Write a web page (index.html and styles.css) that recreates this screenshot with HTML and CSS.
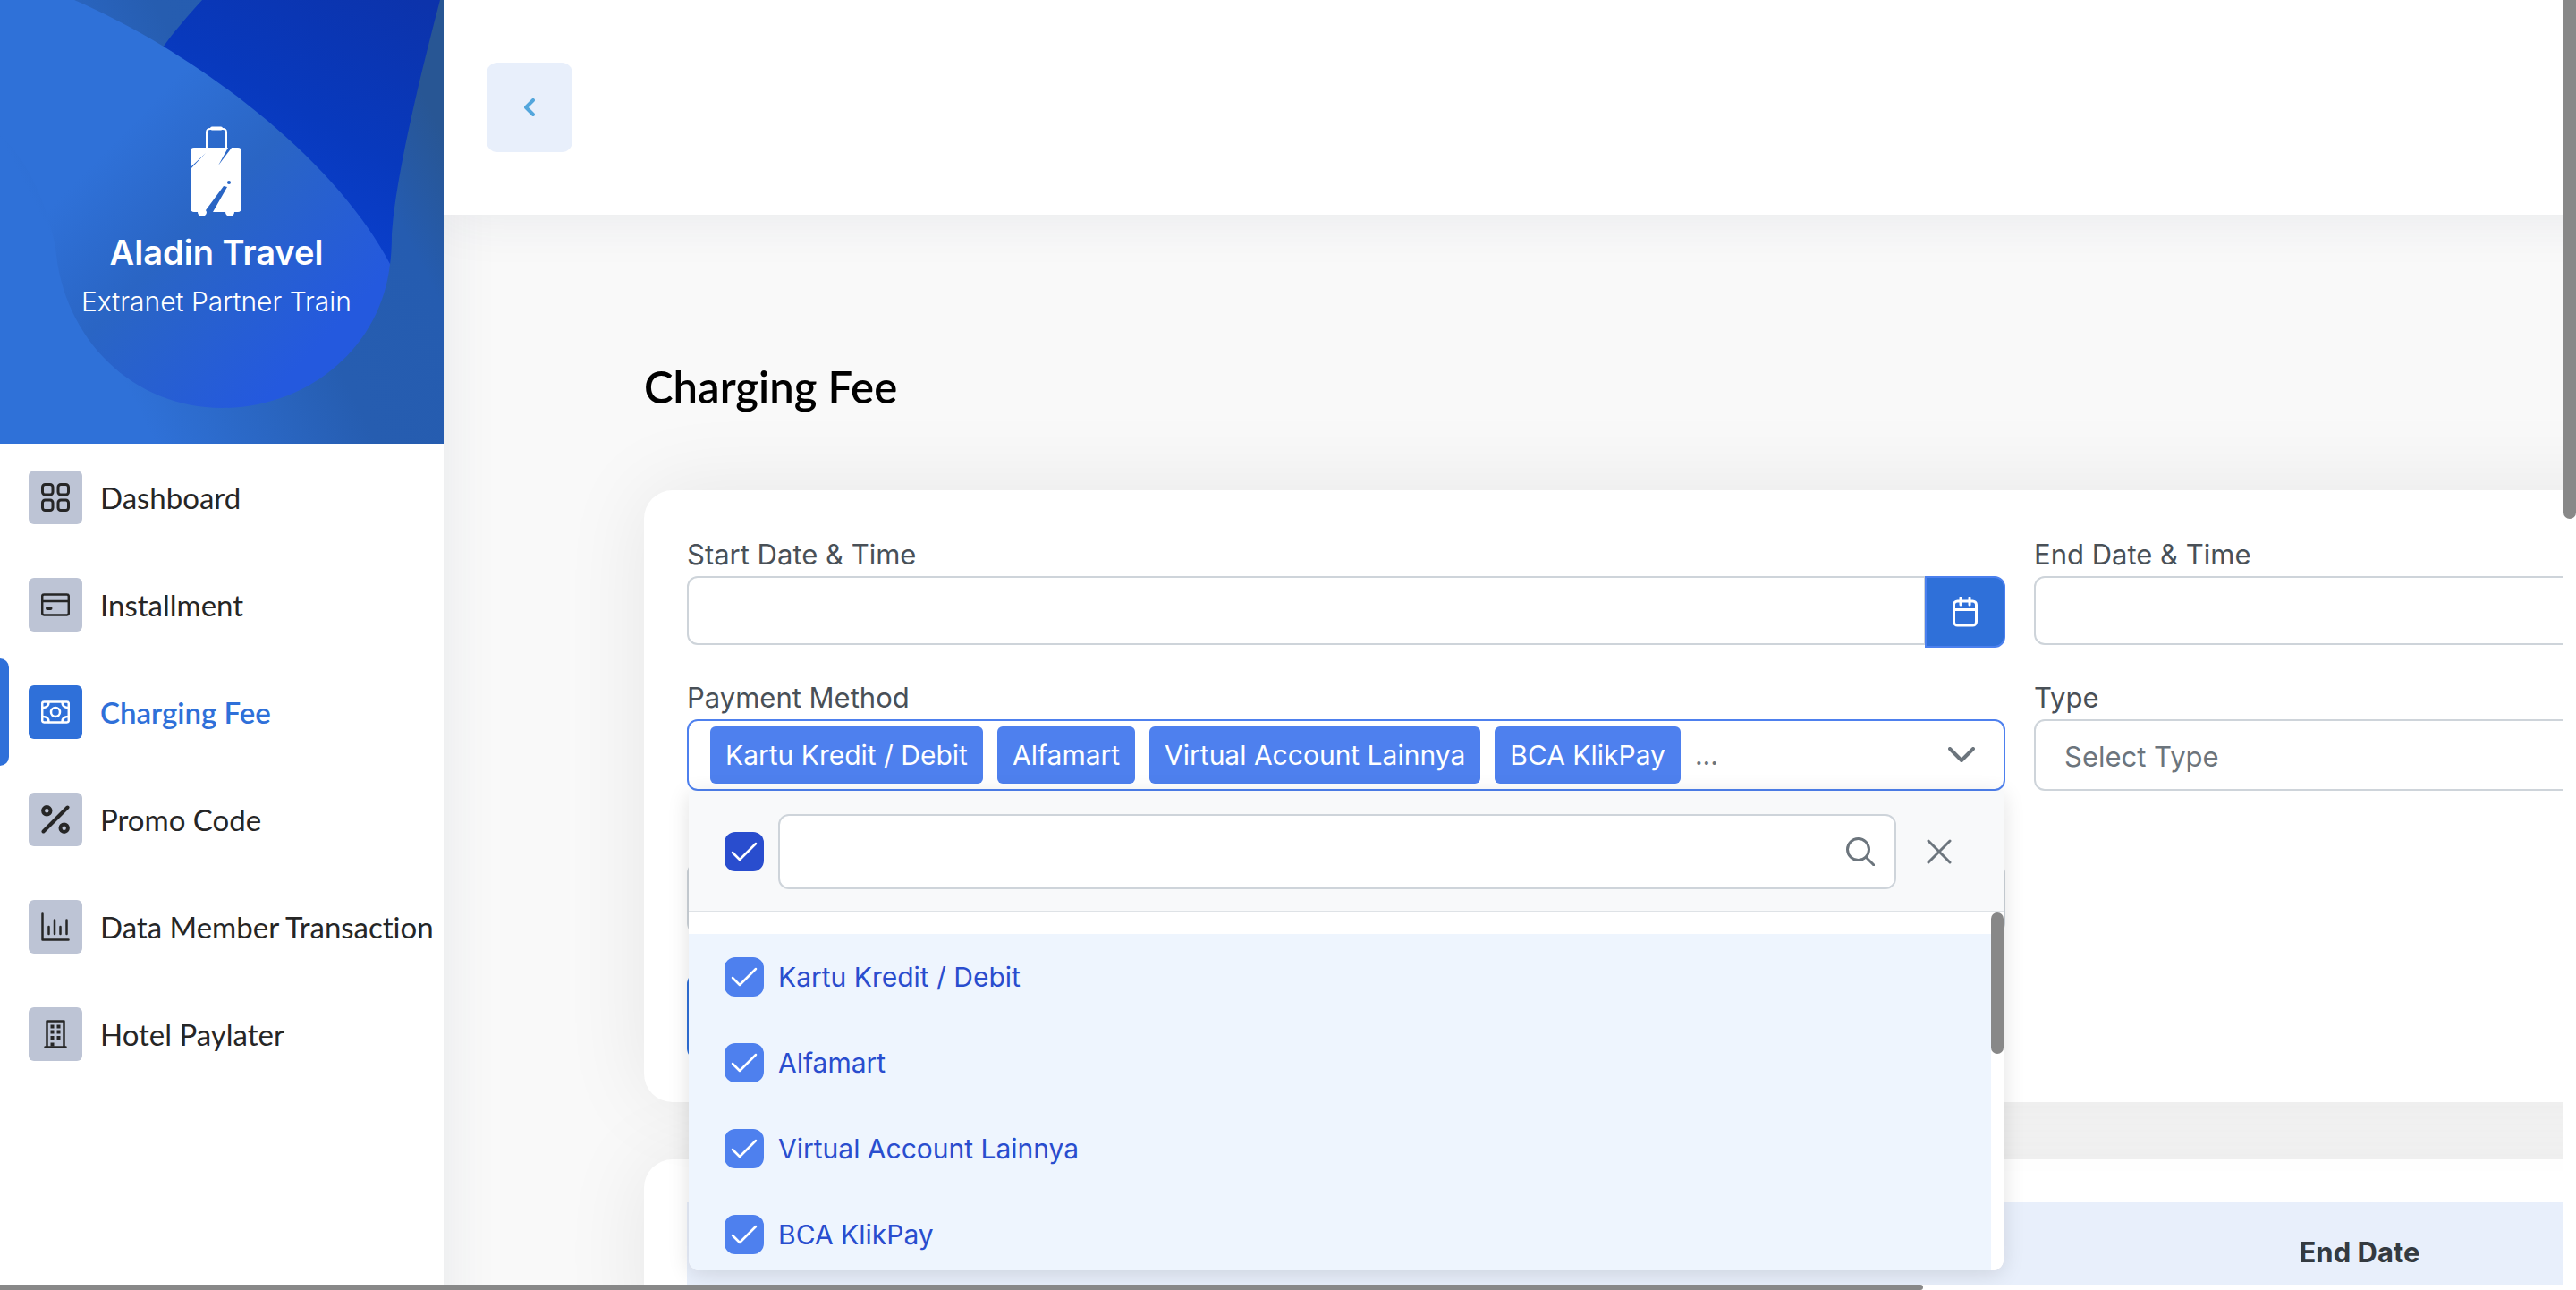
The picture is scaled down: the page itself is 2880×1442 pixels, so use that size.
FILE: index.html
```html
<!DOCTYPE html>
<html lang="id">
<head>
<meta charset="utf-8">
<meta name="viewport" content="width=device-width, initial-scale=1">
<title>Charging Fee</title>
<link rel="stylesheet" href="styles.css">
</head>
<body>
<div class="viewport">
  <div class="pane">
    <div class="page">
      <aside class="sidebar">
        <div class="banner">
          <svg class="banner-art" viewBox="0 0 496 496" preserveAspectRatio="none" aria-hidden="true">
            <defs>
              <linearGradient id="base" gradientUnits="userSpaceOnUse" x1="100" y1="350" x2="496" y2="150">
                <stop offset="0" stop-color="#2f71d8"/><stop offset=".5" stop-color="#265db0"/><stop offset=".8" stop-color="#255cb0"/><stop offset="1" stop-color="#285694"/>
              </linearGradient>
              <linearGradient id="deep" gradientUnits="userSpaceOnUse" x1="470" y1="0" x2="330" y2="250">
                <stop offset="0" stop-color="#0c33ab"/><stop offset=".6" stop-color="#0839bd"/><stop offset="1" stop-color="#0a3fcc"/>
              </linearGradient>
              <linearGradient id="drop" gradientUnits="userSpaceOnUse" x1="90" y1="130" x2="370" y2="400">
                <stop offset=".12" stop-color="#2f71d8"/><stop offset=".45" stop-color="#2a65c4"/><stop offset=".95" stop-color="#2459de"/>
              </linearGradient>
            </defs>
            <path fill="url(#base)" d="M0 0h496v496H0z"/>
            <path fill="url(#deep)" d="M226 0C208 20 194 36 182 53L300 240L436 296Q438 282 438 262C442 205 463 110 492 0Z"/>
            <path fill="url(#drop)" d="M0 0H83C210 55 370 170 436 295C426 388 345 456 248 456C150 456 70 380 62 276C50 220 30 180 0 150Z"/>
          </svg>
          <svg class="luggage" viewBox="0 0 58 102" aria-hidden="true">
            <path fill="none" stroke="#fff" stroke-width="2" d="M18 25V7q0-4 4-4h14q4 0 4 4v18"/>
            <path stroke="#fff" stroke-width="4" stroke-linecap="round" d="M24 2.500h10"/>
            <path fill="#fff" d="M4 24H42L31 44L46 24H53Q57 24 57 28V91Q57 96 53 96H49A5 5 0 0 1 39 96H25L41 68L37 67L17 94L18 96A5 5 0 0 1 8 96H4Q0 96 0 91V48L17 30L0 46V28Q0 24 4 24Z"/>
            <circle cx="43" cy="63" r="2" fill="#2b66c4"/>
          </svg>
          <p class="brand">Aladin Travel</p>
          <p class="tagline">Extranet Partner Train</p>
        </div>
        <nav class="nav">
          <a class="nav-item" href="#"><span class="nav-icon"><svg viewBox="0 0 32 32"><g stroke-width="3"><rect x="1.500" y="1.500" width="11.500" height="11.500" rx="3"/><rect x="19" y="1.500" width="11.500" height="11.500" rx="3"/><rect x="1.500" y="19" width="11.500" height="11.500" rx="3"/><rect x="19" y="19" width="11.500" height="11.500" rx="3"/></g></svg></span>Dashboard</a>
          <a class="nav-item" href="#"><span class="nav-icon"><svg viewBox="0 0 32 32"><rect x="1.200" y="4.500" width="29.600" height="23" rx="2"/><path d="M1 12h30"/><path stroke-width="4" d="M7 20h3.500"/></svg></span>Installment</a>
          <a class="nav-item active" href="#" aria-current="page"><span class="nav-icon"><svg viewBox="0 0 32 32"><rect x="1.200" y="4.500" width="29.600" height="23" rx="2"/><circle cx="16" cy="16" r="5"/><path d="M8.500 5q0 6-7 6M23.500 5q0 6 7 6M8.500 27q0-6-7-6M23.500 27q0-6 7-6"/></svg></span>Charging Fee</a>
          <a class="nav-item" href="#"><span class="nav-icon"><svg viewBox="0 0 32 32"><g stroke-width="4"><circle cx="6.300" cy="6.300" r="4.200"/><circle cx="25.700" cy="25.700" r="4.200"/><path d="M2.500 29.500L29.500 2.500"/></g></svg></span>Promo Code</a>
          <a class="nav-item" href="#"><span class="nav-icon"><svg viewBox="0 0 32 32"><path d="M1.500 1.500v29h29M8.500 16v8M15 8.500V24M21.500 16v8M28.500 8.500V24"/></svg></span>Data Member Transaction</a>
          <a class="nav-item" href="#"><span class="nav-icon"><svg viewBox="0 0 32 32"><path d="M4.500 30.500h23M6.500 30V1.500h19V30"/><path stroke-width="4" stroke-linecap="butt" d="M10.500 7.500h4M17.500 7.500h4M10.500 13.500h4M17.500 13.500h4M10.500 20h4M17.500 20h4M10.500 27.500h4"/></svg></span>Hotel Paylater</a>
        </nav>
      </aside>

      <main class="main">
        <header class="topbar">
          <button class="back" type="button" aria-label="Back"><svg viewBox="0 0 12 20" aria-hidden="true"><path d="M10 2L2 10l8 8"/></svg></button>
        </header>

        <div class="content">
          <h1 class="title">Charging Fee</h1>

          <form class="card filter">
            <div class="field">
              <label for="start">Start Date &amp; Time</label>
              <div class="date">
                <input class="control" id="start" type="text">
                <button class="date-button" type="button" aria-label="Open calendar"><svg viewBox="0 0 28 34" aria-hidden="true"><rect x="1.500" y="5" width="25" height="27" rx="4"/><path d="M2 14.500h24M9 1v8M19 1v8"/></svg></button>
              </div>
            </div>
            <div class="field">
              <label for="end">End Date &amp; Time</label>
              <div class="date">
                <input class="control" id="end" type="text">
                <button class="date-button" type="button" aria-label="Open calendar"></button>
              </div>
            </div>
            <div class="field anchor">
              <label for="methods">Payment Method</label>
              <button class="control multi" id="methods" type="button" aria-expanded="true">
                <span class="chip">Kartu Kredit / Debit</span>
                <span class="chip">Alfamart</span>
                <span class="chip">Virtual Account Lainnya</span>
                <span class="chip">BCA KlikPay</span>
                <span class="more">...</span>
                <svg class="chevron" viewBox="0 0 30 18" aria-hidden="true"><path d="M2 2l13 13L28 2"/></svg>
              </button>
              <div class="panel">
                <div class="panel-head">
                  <input class="tick all" type="checkbox" checked aria-label="Select all">
                  <div class="search">
                    <input class="control" type="text" aria-label="Filter">
                    <svg viewBox="0 0 32 32" aria-hidden="true"><circle cx="13.500" cy="13.500" r="12"/><path d="M22.500 22.500L31 31"/></svg>
                  </div>
                  <button class="close" type="button" aria-label="Close"><svg viewBox="0 0 28 28" aria-hidden="true"><path d="M2 2l24 24M26 2L2 26"/></svg></button>
                </div>
                <div class="options">
                  <div class="option-list">
                    <label class="option"><input class="tick" type="checkbox" checked>Kartu Kredit / Debit</label>
                    <label class="option"><input class="tick" type="checkbox" checked>Alfamart</label>
                    <label class="option"><input class="tick" type="checkbox" checked>Virtual Account Lainnya</label>
                    <label class="option"><input class="tick" type="checkbox" checked>BCA KlikPay</label>
                  </div>
                  <div class="track"><div class="thumb options-thumb"></div></div>
                </div>
              </div>
            </div>
            <div class="field">
              <label for="type">Type</label>
              <select class="control" id="type"><option>Select Type</option></select>
            </div>
            <div class="field unlabelled">
              <input class="control" type="text" aria-label="Fee">
            </div>
            <div class="actions"><button class="submit" type="submit" aria-label="Search"></button></div>
          </form>

          <section class="card">
            <table class="fees">
              <colgroup><col class="col"><col class="col"><col class="col"><col></colgroup>
              <thead><tr><th></th><th></th><th>End Date</th><th></th></tr></thead>
            </table>
          </section>
        </div>
      </main>
    </div>
  </div>
  <div class="track"><div class="thumb page-thumb-y"></div></div>
  <div class="track"><div class="thumb page-thumb-x"></div></div>
</div>
</body>
</html>
```
FILE: styles.css
```css
* { box-sizing: border-box; }

body {
  margin: 0;
  overflow: hidden;
  background: #fff;
  color: #495057;
  font: 31px/48px Inter, "Liberation Sans", sans-serif;
}

h1, p { margin: 0; }
button, input, select { margin: 0; font: inherit; color: inherit; }
button { padding: 0; border: 0; background: none; cursor: pointer; }
svg { display: block; }

/* Window with its two scroll bars */
.viewport {
  display: grid;
  grid-template: minmax(0, 1fr) 6px / minmax(0, 1fr) 14px;
  height: 100vh;
}
.pane { overflow: hidden; }
.track { background: #fff; overflow: hidden; }
.thumb { border-radius: 8px; background: #888; }
.page-thumb-y { height: 40.4%; border-radius: 0 0 8px 8px; }
.page-thumb-x { width: 75%; height: 100%; border-radius: 0 4px 4px 0; }
.options-thumb { height: 158px; }

.page {
  display: flex;
  width: calc(100vw + 960px);
  min-height: 100%;
}

/* Sidebar */
.sidebar {
  flex: none;
  position: relative;
  z-index: 1;
  width: 496px;
  background: #fff;
  box-shadow: 0 0 60px rgba(40, 60, 90, .09);
}
.banner {
  position: relative;
  display: flex;
  flex-direction: column;
  align-items: center;
  height: 496px;
  padding: 141px 12px 0 0;
  color: #fff;
}
.banner-art { position: absolute; inset: 0; width: 100%; height: 100%; }
.luggage { position: relative; width: 58px; height: 102px; }
.brand {
  position: relative;
  margin-top: 15px;
  font-size: 38px;
  font-weight: 600;
}
.tagline {
  position: relative;
  margin-top: 7px;
  font-size: 30px;
  font-weight: 300;
}
.nav-item {
  display: flex;
  align-items: center;
  gap: 20px;
  height: 120px;
  padding-left: 32px;
  color: #262626;
  font: 33px/48px Lato, "Open Sans", sans-serif;
  font-variant-ligatures: none;
  white-space: nowrap;
  text-decoration: none;
}
.nav-icon {
  display: grid;
  place-items: center;
  width: 60px;
  height: 60px;
  border-radius: 6px;
  background: #bdc4d5;
}
.nav-icon svg {
  width: 32px;
  height: 32px;
  fill: none;
  stroke: currentColor;
  stroke-width: 2.5;
  stroke-linecap: round;
  stroke-linejoin: round;
}
.nav-item.active {
  position: relative;
  color: #2f70d9;
  font-weight: 600;
}
.nav-item.active::before {
  content: "";
  position: absolute;
  inset: 0 auto 0 0;
  width: 10px;
  border-radius: 0 10px 10px 0;
  background: #2f70d9;
}
.active .nav-icon { background: #2f70d9; color: #fff; }

/* Main column */
.main { flex: 1; min-width: 0; background: #f9f9f9; }
.topbar {
  position: relative;
  z-index: 2;
  display: flex;
  align-items: center;
  height: 240px;
  padding-left: 48px;
  background: #fff;
  box-shadow: 0 0 60px rgba(40, 60, 90, .09);
  clip-path: inset(0 0 -80px 0);
}
.back {
  display: grid;
  place-items: center;
  width: 96px;
  height: 100px;
  border-radius: 12px;
  background: #e8effb;
}
.back svg {
  width: 12px;
  height: 20px;
  fill: none;
  stroke: #53a6dc;
  stroke-width: 4;
  stroke-linecap: round;
  stroke-linejoin: round;
}
.content {
  display: grid;
  gap: 64px;
  padding: 160px 44px 64px 224px;
}
.title {
  margin-bottom: 20px;
  color: #000;
  font: 600 49px/64px Lato, "Open Sans", sans-serif;
}
.card {
  padding: 48px;
  border-radius: 32px;
  background: #fff;
  box-shadow: 0 0 96px rgba(0, 0, 0, .08);
}

/* Filter form */
.filter {
  position: relative;
  z-index: 1;
  display: grid;
  grid-template-columns: 1fr 1fr;
  gap: 32px;
}
.field label { display: block; width: max-content; }
.unlabelled { padding-top: 48px; }
.control {
  display: block;
  width: 100%;
  height: 80px;
  padding: 0 32px;
  border: 2px solid #ced4da;
  border-radius: 12px;
  outline: 0;
  background: #fff;
}
.date { display: flex; align-items: flex-start; height: 80px; }
.date .control {
  flex: 1;
  height: 77px;
  border-right-width: 1px;
  border-radius: 12px 0 0 12px;
}
.date-button {
  display: grid;
  place-items: center;
  width: 90px;
  height: 80px;
  border: 2px solid #4b80ee;
  border-radius: 0 12px 12px 0;
  background: #2f70d9;
}
.date-button svg, .chevron, .search svg, .close svg {
  fill: none;
  stroke: #6c757d;
  stroke-width: 3;
  stroke-linecap: round;
  stroke-linejoin: round;
}
.date-button svg { width: 28px; height: 34px; stroke: #fff; }
select.control { appearance: none; padding-top: 4px; color: #6c757d; }

/* Multi-select and its open panel */
.anchor { position: relative; }
.multi {
  display: flex;
  align-items: center;
  gap: 16px;
  padding: 0 32px 0 24px;
  border-color: #4e80ee;
  font-size: 30px;
}
.chip {
  padding: 8px 17px;
  border-radius: 6px;
  background: #4e80ee;
  color: #fff;
}
.more { color: #6c757d; }
.chevron { width: 30px; height: 18px; margin-left: auto; stroke-width: 4; }
.panel {
  position: absolute;
  top: 128px;
  left: 2px;
  right: 2px;
  overflow: hidden;
  border-radius: 0 0 12px 12px;
  background: #fff;
  color: #294dce;
  font-size: 30px;
  box-shadow: 0 4px 24px rgba(0, 0, 0, .12);
}
.panel-head {
  display: flex;
  align-items: center;
  gap: 16px;
  height: 136px;
  padding: 2px 40px 0;
  border-bottom: 2px solid #dee2e6;
  background: #f8f9fa;
}
.tick {
  flex: none;
  appearance: none;
  width: 44px;
  height: 44px;
  border-radius: 12px;
  background: #4e80ee url("data:image/svg+xml,%3Csvg xmlns='http://www.w3.org/2000/svg' viewBox='0 0 44 44' fill='none' stroke='white' stroke-width='2.500' stroke-linecap='round' stroke-linejoin='round'%3E%3Cpath d='M9 23l8 8L35 13'/%3E%3C/svg%3E");
}
.tick.all { background-color: #294dce; }
.search { position: relative; flex: 1; }
.search .control { height: 84px; }
.search svg {
  position: absolute;
  top: 26px;
  right: 24px;
  width: 32px;
  height: 32px;
}
.close {
  display: grid;
  place-items: center;
  width: 64px;
  height: 64px;
}
.close svg { width: 28px; height: 28px; }
.options {
  display: grid;
  grid-template-columns: 1fr 14px;
  height: 400px;
  overflow: hidden;
}
.option-list { padding-top: 24px; }
.field .option {
  display: flex;
  align-items: center;
  gap: 16px;
  width: auto;
  height: 96px;
  padding: 0 40px;
  background: #eef5fe;
}
.actions { grid-column: 1 / -1; margin-top: 12px; }
.submit {
  display: block;
  width: 240px;
  height: 96px;
  border-radius: 12px;
  background: #2f70d9;
}

/* Results */
.fees {
  width: 100%;
  table-layout: fixed;
  border-collapse: collapse;
}
.col { width: 748px; }
.fees th {
  height: 112px;
  padding: 0;
  background: #e8effb;
  color: #343a40;
  font-weight: 700;
  text-align: center;
}
```
